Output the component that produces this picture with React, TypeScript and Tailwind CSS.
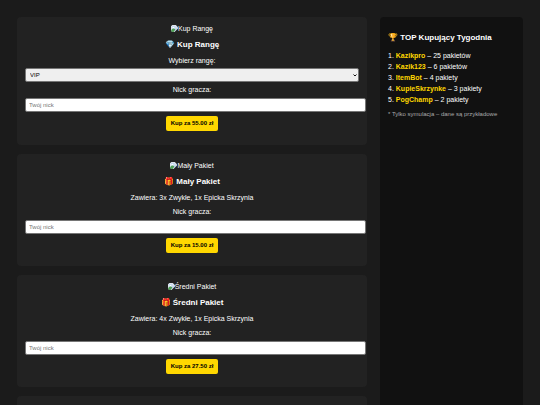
import { useState } from "react"

type Offer = {
  id: string
  icon: string
  name: string
  contents?: string
  price: number
}

const RANKS = [
  { name: "VIP", price: 55 },
  { name: "SVIP", price: 80 },
  { name: "Sponsor", price: 120 },
]

const PACKAGES: Offer[] = [
  { id: "maly", icon: "🎁", name: "Mały Pakiet", contents: "3x Zwykłe, 1x Epicka Skrzynia", price: 15 },
  { id: "sredni", icon: "🎁", name: "Średni Pakiet", contents: "4x Zwykłe, 1x Epicka Skrzynia", price: 27.5 },
]

const TOP_BUYERS = [
  { nick: "Kazikpro", count: "25 pakietów" },
  { nick: "Kazik123", count: "6 pakietów" },
  { nick: "ItemBot", count: "4 pakiety" },
  { nick: "KupieSkrzynke", count: "3 pakiety" },
  { nick: "PogChamp", count: "2 pakiety" },
]

// Obrazek zastępczy, dopóki nie ma grafik pakietów
function Thumbnail({ label }: { label: string }) {
  return (
    <div className="flex h-2 items-start justify-center">
      <svg viewBox="0 0 16 16" className="size-[7px] shrink-0" aria-hidden="true">
        <path d="M3 0h8l5 5v6L11 16H3L0 13V3z" fill="#dfe5ec" />
        <path d="M3 2h7v4h4v3l-5 5H2V3z" fill="#c3d7f2" />
        <path d="M3 7c0-3 5-3 5 0h1v1H2z" fill="#fff" />
        <path d="M0 13c2-6 8-6 10-3l-4 6H3z" fill="#4f9f55" />
        <path d="M16 8v8H8z" fill="#222" />
      </svg>
      <span>{label}</span>
    </div>
  )
}

function NickField({ id }: { id: string }) {
  // Pole wychodzi poza padding karty
  return (
    <div className="-mr-[7px]">
      <input
        id={id}
        placeholder="Twój nick"
        className="mt-1 block h-[14px] w-full rounded-[2px] border border-[#767676] bg-white px-[3px] text-[6px] text-black placeholder:text-[#757575]"
      />
    </div>
  )
}

function BuyButton({ price }: { price: number }) {
  return (
    <button className="mt-1 h-[15px] rounded-[2px] bg-[#ffd700] px-[5px] text-[6px] leading-[15px] font-bold text-black">
      Kup za {price.toFixed(2)} zł
    </button>
  )
}

function RankCard() {
  const [rank, setRank] = useState(0)

  return (
    <section className="rounded-[4px] bg-[#222] px-2 pt-2 pb-[14px] text-center">
      <Thumbnail label="Kup Rangę" />
      <h3 className="mt-[7px] text-[8px] leading-[10px] font-bold">💎 Kup Rangę</h3>
      <label htmlFor="ranga" className="mt-[7px] block">
        Wybierz rangę:
      </label>
      <div className="relative mt-[3px]">
        <select
          id="ranga"
          value={rank}
          onChange={(e) => setRank(Number(e.target.value))}
          className="block h-[14px] w-full appearance-none rounded-[2px] border border-[#767676] bg-[#efefef] px-1 text-[6px] text-black"
        >
          {RANKS.map((r, i) => (
            <option key={r.name} value={i}>
              {r.name}
            </option>
          ))}
        </select>
        <svg viewBox="0 0 8 6" className="pointer-events-none absolute top-[6px] right-[2px] h-[3px] w-1" aria-hidden="true">
          <path d="M1 1l3 3 3-3" fill="none" stroke="#111" strokeWidth="2" />
        </svg>
      </div>
      <label htmlFor="nick-ranga" className="mt-1 block">
        Nick gracza:
      </label>
      <NickField id="nick-ranga" />
      <BuyButton price={RANKS[rank].price} />
    </section>
  )
}

function PackageCard({ offer }: { offer: Offer }) {
  return (
    <section className="rounded-[4px] bg-[#222] px-2 pt-2 pb-[13px] text-center">
      <Thumbnail label={offer.name} />
      <h3 className="mt-[7px] text-[8px] leading-[10px] font-bold">
        {offer.icon} {offer.name}
      </h3>
      <p className="mt-[7px]">Zawiera: {offer.contents}</p>
      <label htmlFor={`nick-${offer.id}`} className="mt-[6px] block">
        Nick gracza:
      </label>
      <NickField id={`nick-${offer.id}`} />
      <BuyButton price={offer.price} />
    </section>
  )
}

export default function App() {
  return (
    <div className="flex min-h-screen gap-[13px] bg-[#1b1b1b] px-[17px] pt-[17px] font-['Liberation_Sans',Arial,sans-serif] text-[7px] leading-[8px] text-white">
      <main className="flex min-w-0 flex-1 flex-col gap-[9px]">
        <RankCard />
        {PACKAGES.map((p) => (
          <PackageCard key={p.id} offer={p} />
        ))}
        <section className="min-h-[9px] flex-1 rounded-t-[4px] bg-[#222]" />
      </main>

      <aside className="w-[143px] shrink-0 rounded-t-[4px] bg-[#111] px-2 pt-4">
        <h3 className="text-[8px] leading-[10px] font-bold">🏆 TOP Kupujący Tygodnia</h3>
        <ol className="mt-[7px] leading-[11px]">
          {TOP_BUYERS.map((b, i) => (
            <li key={b.nick}>
              {i + 1}. <strong className="text-[#ffd700]">{b.nick}</strong> – {b.count}
            </li>
          ))}
        </ol>
        <p className="mt-[5px] text-[6px] text-[#aaa]">* Tylko symulacja – dane są przykładowe</p>
      </aside>
    </div>
  )
}
